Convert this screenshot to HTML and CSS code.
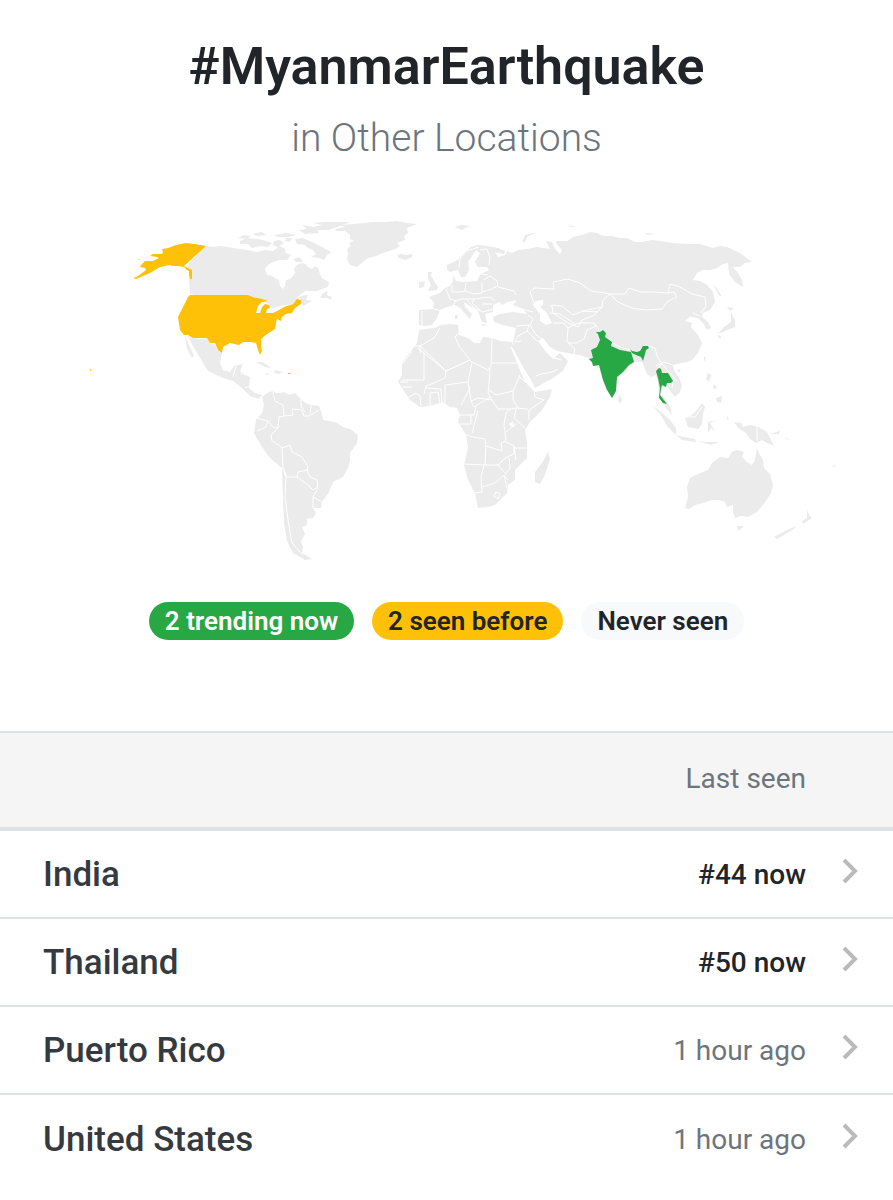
FILE: index.html
```
<!DOCTYPE html>
<html lang="en">

<head>
    <meta charset="UTF-8">
    <meta name="viewport" content="width=device-width, initial-scale=1.0">
    <title>#MyanmarEarthquake in Other Locations</title>
    <link rel="stylesheet" href="styles.css">
</head>

<body>

    <header class="page-title">
        <h1>#MyanmarEarthquake</h1>
        <p>in Other Locations</p>
    </header>

    <svg class="world-map" viewBox="0 200 893 380" role="img" aria-label="World map of locations">
        <g class="land">
            <!-- North America -->
            <path d="M205 246L213 247L220 246L227 247L240 249L248 250L257 252L265 250L273 251L277 248L280 246L285 249L286 253L291 255L287 260L280 260L273 262L268 265L265 269L267 275L272 276L275 278L279 280L280 286L283 289L285 286L286 280L290 279L293 276L295 273L294 269L297 265L301 263L305 264L308 267L312 269L315 266L318 268L320 274L322 278L329 282L328 287L322 289L317 291L305 291L300 295L296 299L304 295L308 295L306 300L312 301L303 306L300 298L292 304L280 306L272 309L268 304L262 300L248 295L194 295L190 293L189 280L191 272L187 266Z"/>
            <path d="M320 298L323 293L328 291L327 295L332 297L331 300L327 298Z"/>
            <path d="M240 241L248 238L257 239L263 240L272 243L268 247L260 246L252 248L248 244L240 244ZM238 238L244 235L251 236L247 239ZM252 234L262 232L266 235L258 236ZM274 241L280 240L284 243L278 247L273 245ZM286 238L292 238L290 242L285 241ZM274 235L286 233L296 235L288 237L278 237Z"/>
            <path d="M295 239L303 238L312 242L320 246L331 252L327 255L324 260L319 258L311 257L316 254L313 250L308 248L305 245L297 244ZM293 259L299 257L303 262L296 262Z"/>
            <path d="M350 222L338 222L325 222L313 223L322 225L314 227L302 225L307 229L299 230L305 234L319 233L317 230L329 230L337 227L345 224Z"/>
            <path d="M335 229L345 227L340 225L354 224L373 222L385 222L397 221L406 223L417 224L407 228L408 233L404 236L405 240L397 243L400 246L395 249L383 253L376 256L368 258L363 262L357 267L350 265L347 259L348 253L347 249L351 246L349 243L354 241L350 239L350 235L345 231L336 231Z"/>
            <path d="M397 255L401 254L405 255L412 254L412 257L405 260L399 258Z"/>
            <path d="M188 336L193 338L202 339L207 338L211 343L215 345L218 350L222 353L220 363L223 370L230 372L234 366L243 364L240 371L250 377L249 388L255 393L262 395L259 399L250 396L242 388L233 381L223 378L208 371L203 363L199 356L192 344ZM185 337L189 345L194 356L192 358L187 348Z"/>
            <path d="M256 362L262 362L272 368L265 367ZM275 370L283 372L279 374L274 373ZM265 373L270 374L267 375Z"/>
            <!-- South America -->
            <path d="M262 397L267 393L272 391L276 393L280 393L284 392L289 395L295 393L298 396L302 400L307 404L312 405L319 406L321 411L323 420L330 421L337 423L343 427L350 429L358 435L357 443L350 453L350 460L348 468L343 477L333 482L329 492L322 502L321 508L313 508L316 513L313 518L307 519L307 525L302 527L305 534L301 541L303 547L302 553L312 559L305 560L293 553L287 541L284 523L283 497L282 468L270 458L262 447L254 433L256 420L262 413L264 405Z"/>
            <!-- Eurasia -->
            <path d="M447 265L458 260L465 252L471 247L478 245L487 246L498 248L505 251L504 254L495 252L498 257L505 255L507 251L512 253L518 250L527 249L537 247L543 248L550 249L546 241L552 242L555 249L560 254L562 250L556 243L557 241L567 241L573 237L582 235L590 232L597 233L603 236L612 236L620 238L627 238L635 242L642 242L652 240L660 241L673 243L687 244L700 244L713 248L720 246L727 247L740 253L752 262L745 263L740 267L733 267L738 273L742 280L743 287L735 282L729 274L728 263L723 264L717 268L710 270L703 270L697 273L693 280L700 281L707 285L713 292L715 302L710 310L703 313L702 317L708 322L711 328L707 330L703 323L698 318L690 317L685 321L692 323L691 327L698 335L702 343L698 353L692 360L687 362L673 365L674 370L679 378L682 385L680 392L675 397L670 391L667 386L662 387L661 394L667 402L671 409L672 415L666 408L659 397L658 383L656 375L651 377L647 374L642 362L634 362L623 373L617 378L615 392L612 398L607 390L602 377L599 367L593 365L588 358L580 355L573 354L557 351L550 347L543 338L538 341L546 352L553 359L560 353L568 361L563 371L553 378L535 388L531 380L523 367L515 352L512 347L514 338L516 328L503 325L494 322L493 317L500 314L513 312L527 314L523 309L513 305L517 300L507 302L502 305L499 302L493 305L493 312L485 314L487 323L482 322L478 311L470 306L464 302L465 307L472 314L470 319L460 308L455 305L447 307L440 310L437 318L432 325L423 326L419 325L419 310L433 309L434 303L429 297L440 293L445 288L450 286L453 281L453 275L456 281L463 282L477 281L480 275L483 273L489 270L487 267L478 267L475 262L480 253L476 250L468 262L469 270L465 277L461 277L458 270L450 272L447 270Z"/>
            <path d="M428 272L432 272L431 276L438 287L437 290L428 291L431 285L428 279ZM419 282L425 281L424 287L419 288ZM454 227L462 225L470 226L465 228L462 230ZM522 242L525 235L538 232L528 236L525 242ZM567 225L577 227L571 227ZM645 233L655 234L648 235ZM481 324L487 325L483 326ZM455 315L458 315L457 319L455 319Z"/>
            <path d="M712 283L717 289L722 297L719 295ZM727 307L734 308L730 311ZM731 313L735 320L735 327L725 331L718 334L724 327L731 322ZM717 335L721 336L720 339ZM704 356L706 358L704 362ZM677 370L681 369L679 373ZM708 373L711 375L709 382L706 379ZM713 384L717 387L714 390ZM716 398L722 396L721 403L717 402ZM619 394L622 399L621 403L618 402Z"/>
            <path d="M653 406L660 411L670 420L676 428L676 435L667 426L661 415ZM676 435L684 437L695 439L696 442L682 440ZM685 418L692 415L697 410L702 403L705 407L703 414L702 424L698 429L688 427ZM708 422L718 420L710 423L715 431L711 428L708 433ZM698 441L707 442L719 442L711 445ZM727 415L729 420L727 419Z"/>
            <path d="M734 422L741 423L743 427L750 425L758 427L767 432L770 438L774 446L767 443L762 440L756 443L750 439L746 433L738 428ZM770 434L780 431L779 434ZM784 437L790 440L786 439ZM802 474L806 475ZM833 465L836 465L834 467Z"/>
            <!-- Africa -->
            <path d="M419 330L425 329L435 328L440 325L450 324L458 325L459 335L468 338L474 343L480 343L483 337L492 338L500 341L512 342L513 348L510 346L518 365L521 373L525 382L535 392L552 389L550 397L542 410L530 422L525 430L527 442L527 458L515 470L515 480L508 485L507 493L495 505L488 507L478 508L475 493L468 480L464 465L468 448L466 435L458 422L460 415L457 408L450 407L443 402L430 406L420 407L410 400L402 388L398 382L402 375L402 363L410 352L417 343Z"/>
            <path d="M548 452L550 459L545 475L540 484L535 482L535 472L542 463Z"/>
            <!-- Oceania -->
            <path d="M685 508L688 497L687 487L690 478L698 474L708 470L712 463L720 457L728 458L732 452L737 450L744 452L742 457L747 462L752 465L755 460L757 448L760 455L763 460L764 468L770 474L773 485L771 493L765 502L757 512L748 517L741 516L735 518L733 512L733 505L727 507L725 502L720 500L712 500L703 503L695 505L689 509ZM737 526L744 526L738 531ZM807 510L809 515L812 518L803 524L802 521L807 518ZM796 526L794 529L777 539L774 537L787 530Z"/>
        </g>

        <g class="water">
            <path d="M533 305L536 301L543 300L543 305L540 307L547 313L552 323L546 325L540 321L540 314Z"/>
            <path d="M509 423L513 422L514 427L510 426Z"/>
        </g>

        <path class="borders" d="M273 392L275 401L283 405L284 416L279 417L278 428L273 427L268 421L257 418M284 416L293 415L292 409L302 410L304 416L309 416L319 410M301 399L301 406L305 412M311 405L310 414M268 421L266 427L257 431M278 428L275 431L271 435L272 441L280 446L282 448L290 445L292 452L302 457L308 467L307 470L298 472L297 477L287 477L283 468L282 448M307 470L310 477L317 480L318 487L313 490L308 485L297 477M318 488L313 497L313 508M313 497L322 502M283 468L286 478L285 497L288 520L292 543L303 555M236 366L233 377M241 373L251 377M245 388L250 386"/>
        <path class="borders" d="M459 268L460 259L466 251L479 247M480 250L487 249L490 258L489 265M483 280L490 276L497 281L498 287L514 291L516 295M466 283L465 291L474 294L482 293L482 282M465 291L461 292L452 292L452 285M446 289L450 299L456 301L462 299L474 299L481 298L490 297L495 301M433 309L443 311M422 311L422 325M456 300L453 306M467 300L474 308L483 312L493 309M474 299L472 303L480 310M482 292L492 289L497 286M481 274L488 275M482 304L492 304M522 309L533 312M528 315L533 319L530 325L516 326M530 325L536 335L542 339M529 325L527 331L518 336L515 342L521 341M527 331L538 342M536 376L541 374L552 372L558 369M554 358L562 360"/>
        <path class="borders" d="M534 303L530 292L534 288L554 289L553 282L568 279L580 283L591 291L605 293L610 294L603 300L602 307L583 311L573 315L562 306L552 305L550 307M610 294L625 294L629 288L641 292L653 292L667 293L674 292L677 297L668 301L662 309L645 310L632 308L618 302L610 294M668 293L670 284L680 287L692 294L705 297L706 306L701 313M552 306L553 313L568 323L578 327L582 320L593 316L603 306M550 313L560 314L575 324M582 311L598 312M553 323L564 323L568 328L567 342L575 349L574 354M568 328L578 323L594 323L596 326L587 330L584 339L577 343L568 343M594 323L599 330M605 338L620 347L631 350M639 350L648 346L655 348L657 356L662 364L658 368M656 366L664 362L673 365M662 364L670 373L677 382M693 313L700 316M673 382L672 388M757 426L757 441M687 417L695 417L702 407"/>
        <path class="borders" d="M440 328L434 338L420 346L446 371L470 360L459 346L455 337L459 333M420 346L411 346L411 353L402 364M418 348L424 353L424 380L402 380M424 353L446 371L445 378L434 383L426 386L424 394M420 346L420 353M446 371L470 360L472 362L468 382L445 385M472 362L488 370L491 366L492 338M492 363L518 363M490 368L489 384L488 393L492 400L478 398L471 401L468 382M468 384L470 388L461 405M471 401L474 407L490 397L498 409L511 409L516 408L528 409M489 390L496 395L513 391L520 375M513 391L513 400L519 409M525 382L519 376M534 390L535 397L544 400L529 410L529 420M516 409L514 418L525 428M511 409L506 413L504 424L506 441L501 443L502 451L486 446L485 439L473 437L466 435M457 415L474 415L476 407M460 424L471 424L471 415M472 433L476 418L478 411M506 432L516 424M506 442L514 446L514 454L509 456L503 460L498 465L485 465L464 464M486 446L485 465M514 448L527 448M514 447L516 460M498 465L506 474L510 468L509 458M484 465L481 477L482 492L475 493M482 487L495 483L504 475L508 480M504 475L507 488M496 492L500 494L498 499L494 496L496 492M403 387L412 387M409 397L416 393L420 396L421 406M430 406L430 393L438 392L440 403M445 403L445 385M442 403L441 389L426 388M400 382L408 382"/>

        <!-- United States, Puerto Rico -->
        <g class="seen">
            <path d="M206 246L195 244L186 243L176 245L168 248L162 249L163 253L161 254L153 254L150 256L157 257L159 258L153 261L145 261L141 265L140 267L145 268L146 270L138 276L133 278L136 279L150 273L160 267L170 265L172 266L178 266L184 267L187 270L189 271L189 275L190 279L192 279L192 270L188 268L184 266Z"/>
            <path d="M190 295L248 295L253 297L262 299L268 301L262 302L258 306L256 313L260 313L262 307L265 304L269 305L270 308L267 309L266 313L273 313L281 309L284 307L293 304L297 299L301 300L301 304L295 308L292 313L286 314L282 317L281 321L277 319L276 323L275 329L267 334L261 339L261 346L262 351L260 355L258 350L256 343L250 342L243 342L239 345L230 343L223 347L222 353L218 350L215 343L210 343L207 338L193 338L188 335L184 335L180 330L178 317L183 307L188 297Z"/>
            <path d="M288 373L291 373L290 374L288 374ZM90 369L92 370L90 371ZM139 259L140 260L138 260Z"/>
        </g>

        <!-- India, Thailand -->
        <g class="trending">
            <path d="M596 332L600 332L603 330L606 333L605 337L612 342L611 346L620 350L631 352L634 362L629 365L623 372L617 377L616 391L612 398L607 390L603 380L599 365L593 366L592 362L589 359L593 358L591 350L597 347L600 340L598 334ZM630 349L632 351L637 352L640 351L643 346L648 346L649 348L646 350L645 354L643 361L641 357L636 355L632 353Z"/>
            <path d="M656 371L659 368L661 369L662 373L668 373L673 381L671 383L667 383L666 387L662 385L661 389L660 395L667 404L663 403L659 398L660 388L658 378Z"/>
        </g>
    </svg>

    <div class="legend">
        <span class="badge badge-trending">2 trending now</span>
        <span class="badge badge-seen">2 seen before</span>
        <span class="badge badge-never">Never seen</span>
    </div>

    <table class="locations">
        <thead>
            <tr>
                <th class="place" aria-label="Location"></th>
                <th class="last-seen">Last seen</th>
                <th class="arrow" aria-label="Details"></th>
            </tr>
        </thead>
        <tbody>
            <tr>
                <td class="place"><a href="#india">India</a></td>
                <td class="last-seen now">#44 now</td>
                <td class="arrow"><svg viewBox="0 0 16 26"><path d="M2 2L13 13L2 24"/></svg></td>
            </tr>
            <tr>
                <td class="place"><a href="#thailand">Thailand</a></td>
                <td class="last-seen now">#50 now</td>
                <td class="arrow"><svg viewBox="0 0 16 26"><path d="M2 2L13 13L2 24"/></svg></td>
            </tr>
            <tr>
                <td class="place"><a href="#puerto-rico">Puerto Rico</a></td>
                <td class="last-seen">1 hour ago</td>
                <td class="arrow"><svg viewBox="0 0 16 26"><path d="M2 2L13 13L2 24"/></svg></td>
            </tr>
            <tr>
                <td class="place"><a href="#united-states">United States</a></td>
                <td class="last-seen">1 hour ago</td>
                <td class="arrow"><svg viewBox="0 0 16 26"><path d="M2 2L13 13L2 24"/></svg></td>
            </tr>
        </tbody>
    </table>

</body>

</html>
```
FILE: styles.css
```
* {
    box-sizing: border-box;
}

body {
    margin: 0;
    background-color: #fff;
    color: #212529;
    font-family: Roboto, "Liberation Sans", sans-serif;
}

.page-title {
    padding-top: 36px;
    text-align: center;
}

.page-title h1 {
    margin: 0;
    font-size: 52px;
    font-weight: 600;
    line-height: 62px;
}

.page-title p {
    margin: 16px 0 0;
    color: #6c757d;
    font-size: 39px;
    font-weight: 300;
    line-height: 48px;
}

/* map */
.world-map {
    display: block;
    width: 100%;
    margin-top: 38px;
}

.land {
    fill: #ebebeb;
}

.water {
    fill: #fff;
}

.borders {
    fill: none;
    stroke: #fff;
    stroke-width: 1;
    stroke-linejoin: round;
}

.seen {
    fill: #ffc107;
}

.trending {
    fill: #28a745;
}

/* legend */
.legend {
    display: flex;
    justify-content: center;
    gap: 18px;
    margin-top: 22px;
}

.badge {
    padding: 0 16px;
    border-radius: 20px;
    font-size: 26px;
    font-weight: 600;
    line-height: 38px;
}

.badge-trending {
    background-color: #28a745;
    color: #fff;
}

.badge-seen {
    background-color: #ffc107;
}

.badge-never {
    background-color: #f8f9fa;
}

/* locations */
.locations {
    width: 100%;
    margin-top: 91px;
    border-collapse: separate;
    border-spacing: 0;
}

.locations th,
.locations td {
    padding: 0;
}

.locations th {
    height: 100px;
    padding-bottom: 4px;
    border-top: 2px solid #dee2e6;
    border-bottom: 4px solid #dee2e6;
    background-color: #f5f5f5;
    font-weight: 400;
}

.locations td {
    height: 88px;
    border-bottom: 2px solid #dee2e6;
}

.locations tr:last-child td {
    border-bottom: 0;
}

.locations .place {
    padding-left: 43px;
    text-align: left;
}

.place a {
    color: #343a40;
    font-size: 35px;
    font-weight: 500;
    text-decoration: none;
}

.last-seen {
    color: #6c757d;
    font-size: 28px;
    text-align: right;
}

.locations .now {
    color: #212529;
    font-weight: 500;
}

.locations .arrow {
    width: 87px;
    padding-bottom: 6px;
}

.arrow svg {
    display: block;
    width: 16px;
    height: 26px;
    margin: 0 auto;
    fill: none;
    stroke: #bbb;
    stroke-width: 4;
}
```
